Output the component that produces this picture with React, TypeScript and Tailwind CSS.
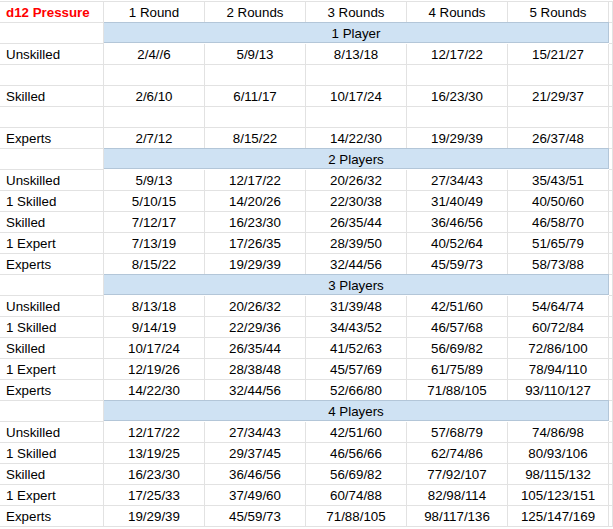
import React from 'react';

type Row =
  | { kind: 'band'; title: string }
  | { kind: 'data'; label: string; values: string[] };

const rows: Row[] = [
  { kind: 'band', title: '1 Player' },
  { kind: 'data', label: 'Unskilled', values: ['2/4//6', '5/9/13', '8/13/18', '12/17/22', '15/21/27'] },
  { kind: 'data', label: '', values: ['', '', '', '', ''] },
  { kind: 'data', label: 'Skilled', values: ['2/6/10', '6/11/17', '10/17/24', '16/23/30', '21/29/37'] },
  { kind: 'data', label: '', values: ['', '', '', '', ''] },
  { kind: 'data', label: 'Experts', values: ['2/7/12', '8/15/22', '14/22/30', '19/29/39', '26/37/48'] },
  { kind: 'band', title: '2 Players' },
  { kind: 'data', label: 'Unskilled', values: ['5/9/13', '12/17/22', '20/26/32', '27/34/43', '35/43/51'] },
  { kind: 'data', label: '1 Skilled', values: ['5/10/15', '14/20/26', '22/30/38', '31/40/49', '40/50/60'] },
  { kind: 'data', label: 'Skilled', values: ['7/12/17', '16/23/30', '26/35/44', '36/46/56', '46/58/70'] },
  { kind: 'data', label: '1 Expert', values: ['7/13/19', '17/26/35', '28/39/50', '40/52/64', '51/65/79'] },
  { kind: 'data', label: 'Experts', values: ['8/15/22', '19/29/39', '32/44/56', '45/59/73', '58/73/88'] },
  { kind: 'band', title: '3 Players' },
  { kind: 'data', label: 'Unskilled', values: ['8/13/18', '20/26/32', '31/39/48', '42/51/60', '54/64/74'] },
  { kind: 'data', label: '1 Skilled', values: ['9/14/19', '22/29/36', '34/43/52', '46/57/68', '60/72/84'] },
  { kind: 'data', label: 'Skilled', values: ['10/17/24', '26/35/44', '41/52/63', '56/69/82', '72/86/100'] },
  { kind: 'data', label: '1 Expert', values: ['12/19/26', '28/38/48', '45/57/69', '61/75/89', '78/94/110'] },
  { kind: 'data', label: 'Experts', values: ['14/22/30', '32/44/56', '52/66/80', '71/88/105', '93/110/127'] },
  { kind: 'band', title: '4 Players' },
  { kind: 'data', label: 'Unskilled', values: ['12/17/22', '27/34/43', '42/51/60', '57/68/79', '74/86/98'] },
  { kind: 'data', label: '1 Skilled', values: ['13/19/25', '29/37/45', '46/56/66', '62/74/86', '80/93/106'] },
  { kind: 'data', label: 'Skilled', values: ['16/23/30', '36/46/56', '56/69/82', '77/92/107', '98/115/132'] },
  { kind: 'data', label: '1 Expert', values: ['17/25/33', '37/49/60', '60/74/88', '82/98/114', '105/123/151'] },
  { kind: 'data', label: 'Experts', values: ['19/29/39', '45/59/73', '71/88/105', '98/117/136', '125/147/169'] },
];

const headers = ['1 Round', '2 Rounds', '3 Rounds', '4 Rounds', '5 Rounds'];

const cell = 'h-[21px] pt-[2px] border-r border-b border-[#e2e2e2] flex items-center';

export default function App() {
  return (
    <div className="w-[613px] h-[529px] bg-white overflow-hidden font-['Liberation_Sans',Arial,sans-serif] text-[13.33px] text-black">
      <div className="mt-px border-t border-[#e2e2e2] grid grid-cols-[104px_101px_101px_101px_101px_101px_1fr]">
        <div className={`${cell} pl-[6px] font-bold text-[#ff0000]`}>d12 Pressure</div>
        {headers.map((h) => (
          <div key={h} className={`${cell} justify-center`}>{h}</div>
        ))}
        <div className={cell} />

        {rows.map((row, i) =>
          row.kind === 'band' ? (
            <React.Fragment key={i}>
              <div className={cell} />
              <div className="col-span-5 h-[21px] -mt-px pt-[3px] bg-[#cfe2f3] border-y border-r border-[#b3c6d8] flex items-center justify-center">
                {row.title}
              </div>
              <div className={cell} />
            </React.Fragment>
          ) : (
            <React.Fragment key={i}>
              <div className={`${cell} pl-[6px]`}>{row.label}</div>
              {row.values.map((v, j) => (
                <div key={j} className={`${cell} justify-center`}>{v}</div>
              ))}
              <div className={cell} />
            </React.Fragment>
          )
        )}
      </div>
    </div>
  );
}
